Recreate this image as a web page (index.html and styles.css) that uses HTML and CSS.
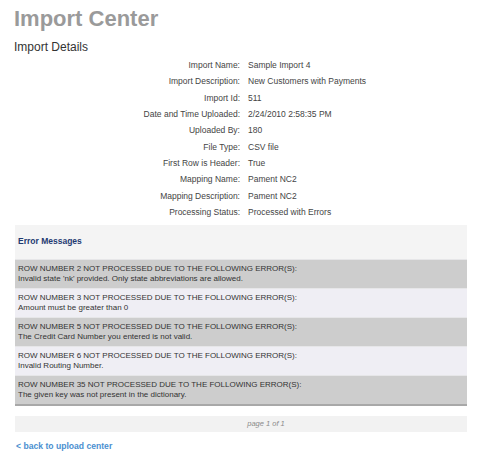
FILE: index.html
```html
<!DOCTYPE html>
<html>
<head>
<meta charset="utf-8">
<link rel="stylesheet" href="styles.css">
</head>
<body>
<div class="page">
  <h1 class="title">Import Center</h1>
  <h2 class="subtitle">Import Details</h2>
  <div class="details">
    <div class="label">Import Name:</div><div class="value">Sample Import 4</div>
    <div class="label">Import Description:</div><div class="value">New Customers with Payments</div>
    <div class="label">Import Id:</div><div class="value">511</div>
    <div class="label">Date and Time Uploaded:</div><div class="value">2/24/2010 2:58:35 PM</div>
    <div class="label">Uploaded By:</div><div class="value">180</div>
    <div class="label">File Type:</div><div class="value">CSV file</div>
    <div class="label">First Row is Header:</div><div class="value">True</div>
    <div class="label">Mapping Name:</div><div class="value">Pament NC2</div>
    <div class="label">Mapping Description:</div><div class="value">Pament NC2</div>
    <div class="label">Processing Status:</div><div class="value">Processed with Errors</div>
  </div>
  <div class="errors">
    <div class="errors-head">Error Messages</div>
    <div class="err odd">ROW NUMBER 2 NOT PROCESSED DUE TO THE FOLLOWING ERROR(S):<br>Invalid state 'nk' provided. Only state abbreviations are allowed.</div>
    <div class="err even">ROW NUMBER 3 NOT PROCESSED DUE TO THE FOLLOWING ERROR(S):<br>Amount must be greater than 0</div>
    <div class="err odd">ROW NUMBER 5 NOT PROCESSED DUE TO THE FOLLOWING ERROR(S):<br>The Credit Card Number you entered is not valid.</div>
    <div class="err even">ROW NUMBER 6 NOT PROCESSED DUE TO THE FOLLOWING ERROR(S):<br>Invalid Routing Number.</div>
    <div class="err odd last">ROW NUMBER 35 NOT PROCESSED DUE TO THE FOLLOWING ERROR(S):<br>The given key was not present in the dictionary.</div>
  </div>
  <div class="pager">page 1 of 1</div>
  <a class="back" href="#">&lt; back to upload center</a>
</div>
</body>
</html>
```
FILE: styles.css
```css
html, body {
  margin: 0;
  padding: 0;
  background: #ffffff;
}
.page {
  font-family: "Liberation Sans", Arial, sans-serif;
  color: #333333;
  padding: 6px 10px 0 14px;
}
.title {
  margin: 0;
  font-size: 22px;
  line-height: 25px;
  font-weight: bold;
  color: #9a9a9a;
}
.subtitle {
  margin: 9px 0 0 0;
  font-size: 12px;
  line-height: 14px;
  font-weight: normal;
  color: #333333;
}
.details {
  margin-top: 3px;
  display: grid;
  grid-template-columns: 226px 1fr;
  column-gap: 8px;
  font-size: 8.5px;
  line-height: 16.33px;
}
.label {
  text-align: right;
  color: #444444;
}
.value {
  color: #444444;
}
.errors {
  margin: 5px 0 0 1px;
  border-bottom: 2px solid #a8a8a8;
}
.errors-head {
  background: #f4f4f4;
  height: 34px;
  line-height: 33px;
  padding-left: 3px;
  font-size: 8.5px;
  font-weight: bold;
  color: #1f3a72;
}
.err {
  border-top: 1px solid #e6e6e8;
  padding: 4px 3px;
  font-size: 8px;
  line-height: 10px;
  color: #333333;
}
.odd {
  background: #cdcdcd;
}
.even {
  background: #efeef4;
}
.pager {
  margin: 10px 0 0 1px;
  background: #f2f2f2;
  height: 16px;
  line-height: 16px;
  text-align: center;
  padding-left: 50px;
  font-size: 7.5px;
  font-style: italic;
  color: #8a8a8a;
}
.back {
  display: block;
  margin-top: 8px;
  margin-left: 2px;
  font-size: 8.6px;
  line-height: 12px;
  font-weight: bold;
  color: #4a8fd0;
  text-decoration: none;
}
```
